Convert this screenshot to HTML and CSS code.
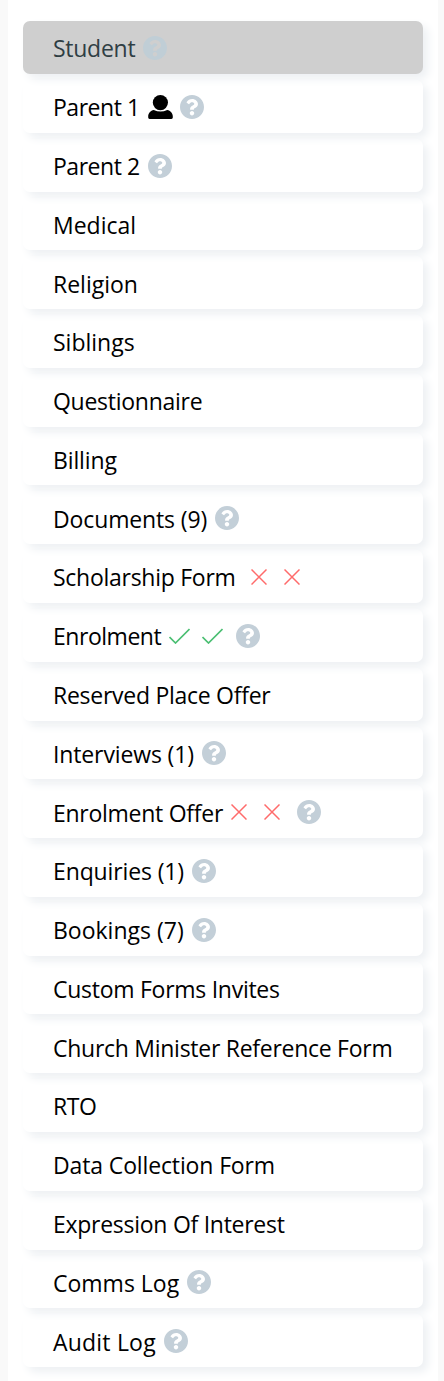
FILE: index.html
```html
<!DOCTYPE html>
<html lang="en">
<head>
    <meta charset="UTF-8">
    <meta name="viewport" content="width=device-width, initial-scale=1.0">
    <title>Student</title>
    <link rel="stylesheet" href="styles.css">
</head>
<body>
    <!-- icons -->
    <svg class="sprite">
        <symbol id="help" viewBox="8 8 496 496">
            <path d="M504 256c0 136.997-111.043 248-248 248S8 392.997 8 256C8 119.083 119.043 8 256 8s248 111.083 248 248zM262.655 90c-54.497 0-89.255 22.957-116.549 63.758-3.536 5.286-2.353 12.415 2.715 16.258l34.699 26.31c5.205 3.947 12.621 3.008 16.665-2.122 17.864-22.658 30.113-35.797 57.303-35.797 20.429 0 45.698 13.148 45.698 32.958 0 14.976-12.363 22.667-32.534 33.976C247.128 238.528 216 254.941 216 296v4c0 6.627 5.373 12 12 12h56c6.627 0 12-5.373 12-12v-1.333c0-28.462 83.186-29.647 83.186-106.667 0-58.002-60.165-102-116.531-102zM256 338c-25.365 0-46 20.635-46 46 0 25.364 20.635 46 46 46s46-20.636 46-46c0-25.365-20.635-46-46-46z"/>
        </symbol>
        <symbol id="user" viewBox="0 0 25 24">
            <circle cx="12.4" cy="7.6" r="7.6"/>
            <path d="M5.800 15C2.500 15.700 0.200 18.300 0.200 21.400V22.600Q0.200 24 1.600 24H23.400Q24.800 24 24.800 22.600V21.400C24.800 18.300 22.500 15.700 19.200 15Q12.500 18.200 5.800 15Z"/>
        </symbol>
        <symbol id="cross" viewBox="0 0 16 16">
            <path d="M0.500 0.500L15.500 15.500M15.500 0.500L0.500 15.500"/>
        </symbol>
        <symbol id="tick" viewBox="0 0 21 16">
            <path d="M0.500 9L6.500 15L20.500 1"/>
        </symbol>
    </svg>

    <div class="panel">
        <ul class="menu">
            <li class="current"><span class="tight">Student</span><svg class="help"><use href="#help"/></svg></li>
            <li><span class="tighter">Parent 1</span><svg class="user"><use href="#user"/></svg><svg class="help"><use href="#help"/></svg></li>
            <li><span class="tighter">Parent 2</span><svg class="help"><use href="#help"/></svg></li>
            <li><span>Medical</span></li>
            <li><span>Religion</span></li>
            <li><span>Siblings</span></li>
            <li><span class="tight">Questionnaire</span></li>
            <li><span class="snug">Billing</span></li>
            <li><span class="snug">Documents (9)</span><svg class="help"><use href="#help"/></svg></li>
            <li><span class="tight">Scholarship Form</span><svg class="cross wide"><use href="#cross"/></svg><svg class="cross"><use href="#cross"/></svg></li>
            <li><span class="tighter">Enrolment</span><svg class="tick"><use href="#tick"/></svg><svg class="tick"><use href="#tick"/></svg><svg class="help"><use href="#help"/></svg></li>
            <li><span class="tight">Reserved Place Offer</span></li>
            <li><span class="snug">Interviews (1)</span><svg class="help"><use href="#help"/></svg></li>
            <li><span class="tight">Enrolment Offer</span><svg class="cross"><use href="#cross"/></svg><svg class="cross"><use href="#cross"/></svg><svg class="help"><use href="#help"/></svg></li>
            <li><span class="snug">Enquiries (1)</span><svg class="help"><use href="#help"/></svg></li>
            <li><span>Bookings (7)</span><svg class="help"><use href="#help"/></svg></li>
            <li><span class="tight">Custom Forms Invites</span></li>
            <li><span class="tight">Church Minister Reference Form</span></li>
            <li><span class="tighter">RTO</span></li>
            <li><span class="snug">Data Collection Form</span></li>
            <li><span class="tight">Expression Of Interest</span></li>
            <li><span>Comms Log</span><svg class="help"><use href="#help"/></svg></li>
            <li><span class="loose">Audit Log</span><svg class="help"><use href="#help"/></svg></li>
        </ul>
    </div>
</body>
</html>
```

FILE: styles.css
```css
*{
    margin: 0;
    padding: 0;
    box-sizing: border-box;
}
body{
    background-color: #f9f9f9;
    font-family: "Open Sans", "Noto Sans", sans-serif;
    font-size: 23px;
    color: #000;
}
ul{
    list-style: none;
}
.sprite{
    display: none;
}
.panel{
    margin: 0 6px 0 8px;
    padding: 21.200px 15px 14px;
    background-color: #fff;
}
.menu{
    display: flex;
    flex-direction: column;
    gap: 6px;
}
.menu li{
    display: flex;
    align-items: center;
    height: 52.79px;
    padding-left: 30px;
    border-radius: 7px;
    box-shadow: 5px 5px 10px #edf0f3;
    white-space: nowrap;
}
.menu li.current{
    background-color: #cfcfcf;
    color: #2f3e44;
}
.menu span{
    line-height: 32px;
    padding-top: 1.6px;
}
/* letter spacing of the labels */
.snug{
    letter-spacing: -0.13px;
}
.tight{
    letter-spacing: -0.27px;
}
.tighter{
    letter-spacing: -0.47px;
}
.loose{
    letter-spacing: 0.2px;
}
.menu svg{
    flex: none;
    margin-top: 0.8px;
}
.help{
    width: 24px;
    height: 24px;
    margin-left: 8px;
    fill: #c3cfd8;
}
.current .help{
    fill: #c0ced6;
}
.user{
    width: 25px;
    height: 24px;
    margin-left: 8px;
}
.user + .help{
    margin-left: 7px;
}
.cross{
    width: 16px;
    height: 16px;
    margin-left: 8px;
    fill: none;
    stroke: #ff6b6b;
    stroke-width: 1.5;
}
.cross + .cross{
    margin-left: 17px;
}
.cross + .help{
    margin-left: 17px;
}
.cross.wide{
    margin-left: 15px;
}
.tick{
    width: 21px;
    height: 16px;
    margin-left: 8px;
    fill: none;
    stroke: #4bbf73;
    stroke-width: 1.7;
}
.tick + .tick{
    margin-left: 12px;
}
.tick + .help{
    margin-left: 13px;
}
```
